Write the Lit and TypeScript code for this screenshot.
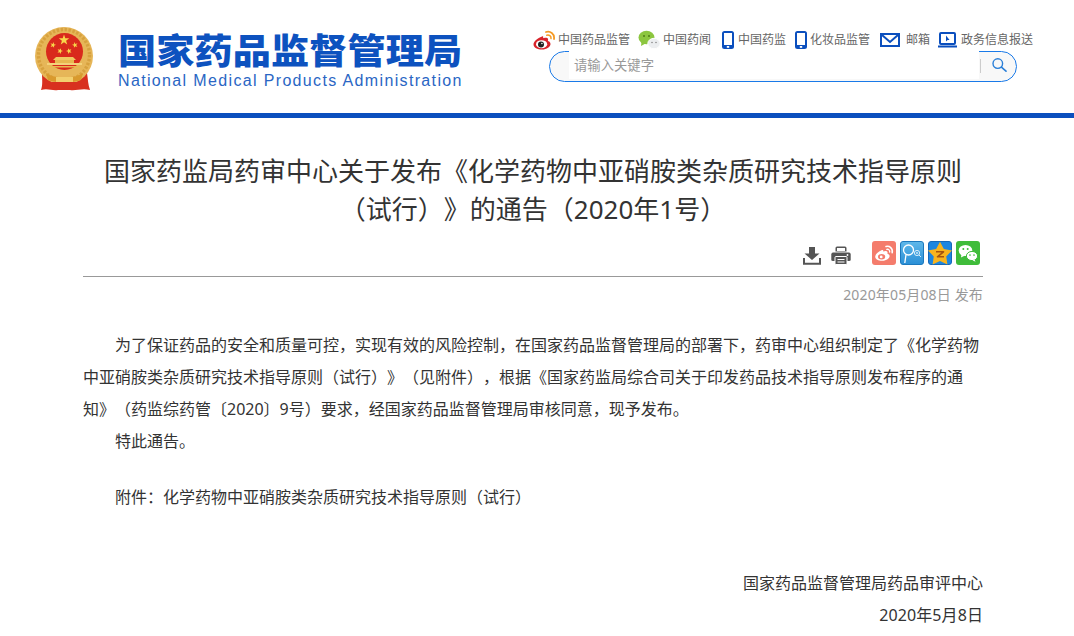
import { LitElement, html, css, svg } from "lit";
import { customElement } from "lit/decorators.js";

const BLUE = "#0b4fbe";
const star = (cx: number, cy: number, r: number, rot = 0, fill = "#f8d64a", ratio = 0.4) => {
  const pts: string[] = [];
  for (let i = 0; i < 10; i++) {
    const rad = i % 2 ? r * ratio : r;
    const a = ((-90 + rot + i * 36) * Math.PI) / 180;
    pts.push(`${(cx + rad * Math.cos(a)).toFixed(2)},${(cy + rad * Math.sin(a)).toFixed(2)}`);
  }
  return svg`<polygon points=${pts.join(" ")} fill=${fill} />`;
};

const emblem = html`<svg class="emblem" width="60" height="65" viewBox="0 0 60 65">
  <path d="M8 46 C8 52 9 58 7 63 C14 61 18 64 24 63 L36 63 C42 64 48 61 56 63 C54 58 54 52 53 46 Z" fill="#d8301f"/>
  <circle cx="30" cy="29" r="29" fill="#e6b658"/>
  <circle cx="30" cy="28" r="25.5" fill="none" stroke="#d39c38" stroke-width="3.4" stroke-dasharray="2.4 1.6" opacity="0.8"/>
  <circle cx="30.5" cy="24.5" r="18.5" fill="#d9291c"/>
  ${star(30, 13, 5.5)}${star(19, 18, 3, 15)}${star(41, 18, 3, -15)}${star(26, 24, 3, 20)}${star(35, 24, 3, -20)}
  <path d="M22 30 L39 30 L42 33 L19 33 Z" fill="#f0c860"/>
  <rect x="21" y="33" width="19" height="3" fill="#e8b850"/>
  <rect x="13" y="36" width="35" height="2" fill="#f3d27a"/>
  <rect x="15" y="39" width="31" height="1.5" fill="#e8b850"/>
  <path d="M12 46 C20 52 41 52 49 46 L47 53 C39 56 22 56 14 53 Z" fill="#d99a2e"/>
  <rect x="18" y="55" width="25" height="6" fill="#d8301f"/>
  <rect x="22" y="50" width="17" height="5" fill="#f2cf6e"/>
</svg>`;

const weibo = html`<svg width="23" height="20" viewBox="0 0 23 20">
  <path d="M9 6.5 C4.5 8 0.5 11.5 0.5 14.5 C0.5 17.5 4.5 19.6 9 19.6 C13.8 19.6 17.5 16.8 17.5 14 C17.5 12 15.8 11.4 14.8 11.1 C15.3 9.8 15.3 8.6 14.2 8 C12.8 7.3 10.6 8 10 8.2 C10.4 7 10.4 5.8 9 6.5 Z" fill="#d8232a"/>
  <ellipse cx="8.6" cy="14.2" rx="5.6" ry="4" fill="#fff"/>
  <circle cx="8" cy="14.4" r="3" fill="#222"/>
  <circle cx="8.9" cy="13.5" r="0.8" fill="#fff"/>
  <path d="M13 2 C17 0.6 21.8 3.6 21 9" fill="none" stroke="#f59a23" stroke-width="1.8" stroke-linecap="round"/>
  <path d="M13.8 5.2 C16 4.6 18.4 6 18 8.6" fill="none" stroke="#f59a23" stroke-width="1.5" stroke-linecap="round"/>
</svg>`;

const wechat = html`<svg width="23" height="20" viewBox="0 0 23 20">
  <ellipse cx="8.5" cy="7.5" rx="8" ry="6.8" fill="#8cc63f"/>
  <path d="M3.5 12 L3 16 L7.5 13.5 Z" fill="#8cc63f"/>
  <ellipse cx="16" cy="13.5" rx="6.2" ry="5.2" fill="#eceef0" stroke="#fff" stroke-width="1"/>
  <circle cx="6" cy="6" r="1" fill="#4f7d16"/><circle cx="11" cy="6" r="1" fill="#4f7d16"/>
  <circle cx="14" cy="12.5" r="0.8" fill="#888"/><circle cx="18" cy="12.5" r="0.8" fill="#888"/>
</svg>`;

const phone = html`<svg width="12" height="18" viewBox="0 0 12 18">
  <rect x="0" y="0" width="12" height="18" rx="2.5" fill=${BLUE}/>
  <rect x="2" y="2" width="8" height="12" fill="#fff"/>
  <rect x="4.8" y="15" width="2.4" height="1.8" fill="#fff"/>
</svg>`;

const mail = html`<svg width="20" height="14" viewBox="0 0 20 14">
  <rect x="1" y="1" width="18" height="12" fill="#fff" stroke=${BLUE} stroke-width="2"/>
  <path d="M2 2 L10 9 L18 2" fill="none" stroke=${BLUE} stroke-width="2"/>
</svg>`;

const monitor = html`<svg width="19" height="16" viewBox="0 0 19 16">
  <rect x="2" y="1" width="15" height="11" rx="1" fill="#fff" stroke=${BLUE} stroke-width="2"/>
  <path d="M8 3.5 L8 9.5 L9.6 8 L11.6 8 Z" fill=${BLUE}/>
  <path d="M0 13.5 H19 V15.5 H0 Z" fill=${BLUE}/>
</svg>`;

const searchIcon = html`<svg width="15" height="14" viewBox="0 0 15 14">
  <circle cx="5.8" cy="5.6" r="4.8" fill="none" stroke="#2a7fd8" stroke-width="1.4"/>
  <path d="M9.4 9.2 L14 13.2" stroke="#2a7fd8" stroke-width="1.6" stroke-linecap="round"/>
</svg>`;

const download = html`<svg width="18" height="18" viewBox="0 0 18 18">
  <path d="M6 0 H12 V6.5 H16.5 L9 13 L1.5 6.5 H6 Z" fill="#555"/>
  <path d="M1 11 V16.8 H17 V11" fill="none" stroke="#555" stroke-width="2"/>
</svg>`;

const printer = html`<svg width="20" height="19" viewBox="0 0 20 19">
  <path d="M4.5 5.5 V2 Q4.5 0.5 6 0.5 H14 Q15.5 0.5 15.5 2 V5.5 Z" fill="#555"/>
  <rect x="6" y="2" width="8" height="3" fill="#fff"/>
  <path d="M2 6.5 H18 Q19.7 6.5 19.7 8.5 V14 Q19.7 15 18 15 H2 Q0.3 15 0.3 14 V8.5 Q0.3 6.5 2 6.5 Z" fill="#555"/>
  <rect x="4" y="10.5" width="12" height="8" rx="1" fill="#555" stroke="#fff" stroke-width="1"/>
  <path d="M6.5 13.5 H13.5 M6.5 16 H13.5" stroke="#fff" stroke-width="1"/>
  <circle cx="16.5" cy="9" r="0.9" fill="#fff"/>
</svg>`;

const shareWeibo = html`<svg width="24" height="24" viewBox="0 0 24 24">
  <rect width="24" height="24" rx="3" fill="#f47c6c"/>
  <path d="M10 9 C6 10.5 3 13.5 3.2 16 C3.4 18.6 7 20 10.5 19.8 C14.5 19.6 17.6 17.4 17.6 15 C17.6 13.6 16.2 13 15.4 12.8 C15.8 11.6 15.6 10.6 14.6 10.2 C13.4 9.8 12 10.3 11.2 10.6 C11.5 9.4 11.2 8.6 10 9 Z" fill="#fff"/>
  <ellipse cx="9.6" cy="15.8" rx="3.6" ry="2.7" fill="#f47c6c"/>
  <circle cx="9.2" cy="15.9" r="1.4" fill="#fff"/>
  <path d="M14 5.5 C17.5 4.6 21 7.2 20.2 11.6" fill="none" stroke="#fff" stroke-width="1.6" stroke-linecap="round"/>
  <path d="M14.8 8.3 C16.5 8 18 9.2 17.7 11" fill="none" stroke="#fff" stroke-width="1.3" stroke-linecap="round"/>
</svg>`;

const shareQzone = html`<svg width="24" height="24" viewBox="0 0 24 24">
  <defs><linearGradient id="qz" x1="0" y1="0" x2="0" y2="1"><stop offset="0" stop-color="#5fb8ea"/><stop offset="1" stop-color="#2a8fd6"/></linearGradient></defs>
  <rect x="0.5" y="0.5" width="23" height="23" rx="2.5" fill="url(#qz)" stroke="#1c78bd"/>
  <circle cx="8.5" cy="9" r="5" fill="none" stroke="#fff" stroke-width="1.3"/>
  <path d="M6 13.5 L4.8 22" stroke="#fff" stroke-width="1.3" fill="none"/>
  <circle cx="17" cy="12" r="2.6" fill="none" stroke="#d8eefb" stroke-width="1"/>
  <circle cx="17" cy="12" r="0.9" fill="#d8eefb"/>
  <path d="M19 14 L21 16" stroke="#d8eefb" stroke-width="1"/>
</svg>`;

const shareQQ = html`<svg width="24" height="24" viewBox="0 0 24 24">
  <rect x="0.5" y="0.5" width="23" height="23" rx="2.5" fill="#1d86e0" stroke="#1668b8"/>
  ${star(12, 13.4, 12.6, 0, "#f8b41e", 0.52)}
  <path d="M8 10.8 H15.5 L9.5 15.8 H16" fill="none" stroke="#a5530f" stroke-width="1.6" stroke-linejoin="round"/>
</svg>`;

const shareWechat = html`<svg width="24" height="24" viewBox="0 0 24 24">
  <rect width="24" height="24" rx="3" fill="#3fbc3a"/>
  <ellipse cx="9.5" cy="9.5" rx="6.8" ry="5.6" fill="#fff"/>
  <path d="M5.5 13 L5 16.5 L9 14.5 Z" fill="#fff"/>
  <ellipse cx="16" cy="15" rx="5.6" ry="4.6" fill="#fff" stroke="#3fbc3a" stroke-width="1"/>
  <path d="M18.5 18.5 L19.5 20.8 L16.5 19.2 Z" fill="#fff"/>
  <circle cx="7.3" cy="8" r="1" fill="#3fbc3a"/><circle cx="11.7" cy="8" r="1" fill="#3fbc3a"/>
  <circle cx="14" cy="14" r="0.85" fill="#3fbc3a"/><circle cx="18" cy="14" r="0.85" fill="#3fbc3a"/>
</svg>`;

const links = [
  { icon: weibo, cls: "w-weibo", label: "中国药品监管" },
  { icon: wechat, cls: "w-wechat", label: "中国药闻" },
  { icon: phone, cls: "w-phone", label: "中国药监" },
  { icon: phone, cls: "w-phone2", label: "化妆品监管" },
  { icon: mail, cls: "w-mail", label: "邮箱" },
  { icon: monitor, cls: "w-mon", label: "政务信息报送" },
];

@customElement("app-root")
export class AppRoot extends LitElement {
  static styles = css`
    :host {
      display: block;
      width: 1074px;
      height: 636px;
      overflow: hidden;
      background: #fff;
      font-family: "Noto Sans", "Noto Sans CJK SC", "Liberation Sans", sans-serif;
      color: #333;
      text-spacing-trim: space-all;
    }
    .header {
      height: 113px;
      border-bottom: 5px solid #0b4fbe;
      display: flex;
    }
    .logo {
      display: flex;
      padding: 27px 0 0 34px;
      width: 500px;
      box-sizing: border-box;
    }
    .emblem { display: block; flex: none; }
    .names { margin: 5px 0 0 24px; }
    .cn {
      font-size: 35px;
      line-height: 37px;
      font-weight: 900;
      color: #0d52bf;
      white-space: nowrap;
      letter-spacing: 0.1px;
      transform: scaleX(1.09);
      transform-origin: left center;
    }
    .en {
      font-family: "Liberation Sans", sans-serif;
      font-size: 16px;
      line-height: 18px;
      margin-top: 3px;
      color: #2a66c4;
      letter-spacing: 1.35px;
      white-space: nowrap;
    }
    .tools { padding: 29px 0 0 33px; width: 500px; box-sizing: border-box; }
    .links { display: flex; height: 22px; align-items: center; white-space: nowrap; }
    .link { display: flex; align-items: center; font-size: 12px; color: #666; line-height: 22px; }
    .link svg { display: block; flex: none; }
    .w-weibo svg, .w-wechat svg { margin-right: 2px; }
    .w-wechat { margin-left: 8px; }
    .w-phone { margin-left: 11px; }
    .w-phone svg { margin-right: 4px; }
    .w-phone2 { margin-left: 9px; }
    .w-phone2 svg { margin-right: 3px; }
    .w-mail { margin-left: 10px; }
    .w-mail svg { margin-right: 6px; }
    .w-mon { margin-left: 8px; }
    .w-mon svg { margin-right: 4px; }
    .search {
      margin: 0 0 0 16px;
      width: 468px;
      height: 31px;
      box-sizing: border-box;
      border: 1px solid #1a7ae8;
      border-radius: 15.5px;
      background: #f8f8f8;
      display: flex;
    }
    .field {
      margin: -1px 0 0 19px;
      width: 410px;
      height: 28px;
      background: #fff;
      font-size: 13.33px;
      line-height: 28px;
      color: #999;
      padding-left: 5px;
      box-sizing: border-box;
      flex: none;
    }
    .sep { width: 1px; height: 14px; background: #ccc; margin: 7px 0 0 1px; flex: none; }
    .go { margin: 6px 0 0 11px; line-height: 0; }
    .article { width: 900px; margin-left: 83px; }
    h1 {
      margin: 0;
      padding-top: 34px;
      font-size: 26px;
      line-height: 38px;
      font-weight: 400;
      color: #333;
      text-align: center;
    }
    .actions {
      display: flex;
      justify-content: flex-end;
      align-items: flex-end;
      height: 49px;
      padding-bottom: 11px;
      border-bottom: 1px solid #999;
      box-sizing: border-box;
    }
    .actions svg { display: block; }
    .actions span { display: block; }
    .actions .dl { margin-right: 10px; }
    .actions .pr { margin-right: 21px; }
    .actions .share { margin-right: 4px; }
    .actions .share:last-child { margin-right: 3px; }
    .date {
      text-align: right;
      font-size: 14px;
      line-height: 36px;
      color: #999;
      letter-spacing: 0.15px;
    }
    .body { margin-top: 16px; font-size: 16px; line-height: 32px; color: #333; }
    .body p { margin: 0; text-indent: 32px; }
    .gap { height: 24px; }
    .sign { text-align: right; }
    .sign-gap { height: 54px; }
    .sign p { text-indent: 0; }
    .sign .when { letter-spacing: 0.1px; }
  `;

  render() {
    return html`
      <div class="header">
        <div class="logo">
          ${emblem}
          <div class="names">
            <div class="cn">国家药品监督管理局</div>
            <div class="en">National Medical Products Administration</div>
          </div>
        </div>
        <div class="tools">
          <div class="links">
            ${links.map(
              (l) => html`<div class="link ${l.cls}">${l.icon}<span>${l.label}</span></div>`
            )}
          </div>
          <div class="search">
            <div class="field">请输入关键字</div>
            <div class="sep"></div>
            <div class="go">${searchIcon}</div>
          </div>
        </div>
      </div>
      <div class="article">
        <h1>国家药监局药审中心关于发布《化学药物中亚硝胺类杂质研究技术指导原则<br />（试行）》的通告（2020年1号）</h1>
        <div class="actions">
          <span class="dl">${download}</span>
          <span class="pr">${printer}</span>
          <span class="share">${shareWeibo}</span>
          <span class="share">${shareQzone}</span>
          <span class="share">${shareQQ}</span>
          <span class="share">${shareWechat}</span>
        </div>
        <div class="date">2020年05月08日 发布</div>
        <div class="body">
          <p>为了保证药品的安全和质量可控，实现有效的风险控制，在国家药品监督管理局的部署下，药审中心组织制定了《化学药物中亚硝胺类杂质研究技术指导原则（试行）》（见附件），根据《国家药监局综合司关于印发药品技术指导原则发布程序的通知》（药监综药管〔2020〕9号）要求，经国家药品监督管理局审核同意，现予发布。</p>
          <p>特此通告。</p>
          <div class="gap"></div>
          <p>附件：化学药物中亚硝胺类杂质研究技术指导原则（试行）</p>
          <div class="sign-gap"></div>
          <div class="sign">
            <p>国家药品监督管理局药品审评中心</p>
            <p class="when">2020年5月8日</p>
          </div>
        </div>
      </div>
    `;
  }
}
